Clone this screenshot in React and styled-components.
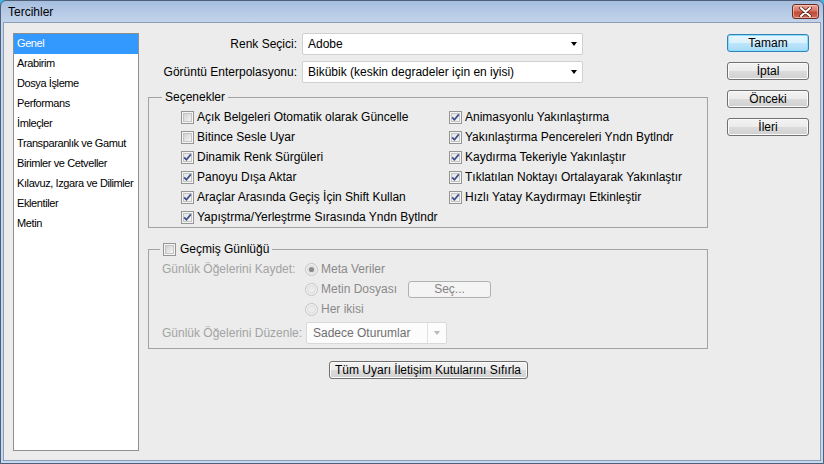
import React from 'react';
import styled, { createGlobalStyle, css } from 'styled-components';

const Global = createGlobalStyle`
  html, body { margin: 0; padding: 0; }
  body {
    font-family: "Liberation Sans", Arial, sans-serif;
    font-size: 12px;
    color: #000;
    background: #3fb6e8;
  }
  * { box-sizing: border-box; }
`;

const Window = styled.div`
  width: 824px;
  height: 464px;
  display: flex;
  flex-direction: column;
  border: 1px solid #4d5f79;
  border-radius: 6px 6px 0 0;
  background: linear-gradient(#a6bedf 0px, #c4d5eb 22px, #c6d8ee 100%);
  padding: 0 2px 2px;
`;

const TitleBar = styled.div`
  height: 21px;
  flex: none;
  display: flex;
  align-items: center;
  justify-content: space-between;
  padding: 0 2px 0 5px;
  font-size: 12px;
  color: #000;
`;

const CloseButton = styled.div`
  width: 27px;
  height: 15px;
  border: 1px solid #6b2a23;
  border-radius: 3px;
  background: linear-gradient(#e8a497 0%, #d57564 45%, #c24a35 55%, #cf6b55 100%);
  box-shadow: inset 0 0 0 1px rgba(255, 220, 210, 0.55);
  display: flex;
  align-items: center;
  justify-content: center;
`;

const Client = styled.div`
  flex: 1;
  display: flex;
  border: 1px solid #8a9db8;
  background: #ececec;
  padding: 10px 11px 9px 9px;
`;

const Sidebar = styled.ul`
  width: 126px;
  margin: 0;
  padding: 0;
  list-style: none;
  background: #fff;
  border: 1px solid #8f8f8f;
  flex: none;
`;

const SideItem = styled.li`
  height: 20px;
  line-height: 19px;
  padding-left: 3px;
  font-size: 11px;
  letter-spacing: -0.4px;
  white-space: nowrap;
  color: ${p => (p.$active ? '#fff' : '#000')};
  background: ${p => (p.$active ? '#3399ff' : 'transparent')};
`;

const Main = styled.div`
  width: 560px;
  margin-left: 9px;
  display: flex;
  flex-direction: column;
  flex: none;
`;

const FormGrid = styled.div`
  display: grid;
  grid-template-columns: 149px 281px;
  column-gap: 5px;
  row-gap: 6px;
  align-items: center;
`;

const FieldLabel = styled.label`
  text-align: right;
  white-space: nowrap;
  color: ${p => (p.$disabled ? '#a3a3a3' : '#000')};
`;

const Select = styled.div`
  position: relative;
  height: ${p => (p.$h || 22)}px;
  display: flex;
  align-items: center;
  padding-left: ${p => (p.$disabled ? 6 : 5)}px;
  background: ${p => (p.$disabled ? '#fcfcfc' : '#fff')};
  border: 1px solid ${p => (p.$disabled ? '#d9d9d9' : '#d0d0d0')};
  border-radius: 2px;
  color: ${p => (p.$disabled ? '#6f6f6f' : '#000')};
  white-space: nowrap;
`;

const SelectText = styled.span`
  flex: 1;
`;

const ArrowCell = styled.span`
  width: ${p => (p.$divided ? 19 : 17)}px;
  align-self: stretch;
  display: flex;
  align-items: center;
  justify-content: center;
  border-left: ${p => (p.$divided ? '1px solid #e2e2e2' : 'none')};
  &::after {
    content: '';
    border-left: 3.5px solid transparent;
    border-right: 3.5px solid transparent;
    border-top: 4px solid ${p => (p.$divided ? '#b9b9b9' : '#000')};
  }
`;

const Group = styled.fieldset`
  margin: ${p => p.$mt}px 0 0;
  padding: ${p => p.$pad};
  border: 1px solid #a3a3a3;
  min-width: 0;
`;

const Legend = styled.legend`
  margin-left: ${p => p.$ml}px;
  padding: 0 3px;
  line-height: 16px;
  font-size: 12px;
  display: flex;
  align-items: center;
  gap: 4px;
`;

const Options = styled.div`
  display: flex;
  padding-left: 32px;
`;

const OptionColumn = styled.div`
  width: ${p => (p.$w ? `${p.$w}px` : 'auto')};
  display: flex;
  flex-direction: column;
`;

const CheckRow = styled.label`
  height: 20px;
  display: flex;
  align-items: center;
  gap: 3px;
  white-space: nowrap;
`;

const BoxSvg = styled.svg`
  flex: none;
  display: block;
`;

const HistoryRow = styled.div`
  display: grid;
  grid-template-columns: 143px auto;
  align-items: ${p => (p.$top ? 'start' : 'center')};
  margin-top: ${p => p.$mt || 0}px;
`;

const RowLabel = styled(FieldLabel)`
  text-align: left;
  line-height: 20px;
`;

const RadioList = styled.div`
  display: flex;
  flex-direction: column;
`;

const RadioRow = styled.div`
  height: 20px;
  display: flex;
  align-items: center;
  gap: 3px;
  color: #8a8a8a;
  white-space: nowrap;
`;

const RadioText = styled.span``;

const Button = styled.button`
  font-family: "Liberation Sans", Arial, sans-serif;
  font-size: 12px;
  height: ${p => p.$h || 18}px;
  width: ${p => (p.$w ? `${p.$w}px` : 'auto')};
  padding: 0;
  border-radius: 3px;
  color: #000;
  line-height: 14px;
  border: 1px solid #707070;
  background: linear-gradient(#f3f3f3 0%, #ebebeb 50%, #dcdcdc 50%, #d0d0d0 100%);
  box-shadow: inset 0 0 0 1px #fbfbfb;
  ${p =>
    p.$primary &&
    css`
      border-color: #3c7fb1;
      background: linear-gradient(#eaf6fd 0%, #d9f0fc 50%, #bee6fd 50%, #a7d9f5 100%);
      box-shadow: inset 0 0 0 1px #7fe0ff;
    `}
  ${p =>
    p.$disabled &&
    css`
      border-color: #adb2b5;
      background: #f4f4f4;
      box-shadow: none;
      color: #838383;
    `}
`;

const SelectButton = styled(Button)`
  margin-left: 8px;
`;

const ResetButton = styled(Button)`
  align-self: center;
  margin-top: 12px;
`;

const ButtonColumn = styled.div`
  width: 82px;
  margin-left: 19px;
  padding-top: 1px;
  display: flex;
  flex-direction: column;
  gap: 10px;
  flex: none;
`;

let gid = 0;
function CheckBox({ checked }) {
  const id = React.useMemo(() => `cb${gid++}`, []);
  return (
    <BoxSvg width="13" height="13" viewBox="0 0 13 13">
      <defs>
        <linearGradient id={id} x1="0" y1="0" x2="1" y2="1">
          <stop offset="0" stopColor={checked ? '#e4e4e4' : '#cfcfcf'} />
          <stop offset="1" stopColor="#f7f7f7" />
        </linearGradient>
      </defs>
      <rect x="0.5" y="0.5" width="12" height="12" fill="#f5f5f5" stroke="#959595" />
      <rect x="2.5" y="2.5" width="8" height="8" fill={`url(#${id})`} stroke="#c4c4c4" />
      {checked && (
        <path d="M3.2 6.4 L5.4 8.8 L9.8 3.4" fill="none" stroke="#3b4f8c" strokeWidth="1.7" />
      )}
    </BoxSvg>
  );
}

function Radio({ checked }) {
  return (
    <BoxSvg width="13" height="13" viewBox="0 0 13 13">
      <circle cx="6.5" cy="6.5" r="6" fill="#f4f4f4" stroke="#c2c2c2" />
      <circle cx="6.5" cy="6.5" r="4" fill="#ebebeb" stroke="#dadada" />
      {checked && <circle cx="6.5" cy="6.5" r="2.6" fill="#8c8c8c" />}
    </BoxSvg>
  );
}

const sideItems = [
  'Genel',
  'Arabirim',
  'Dosya İşleme',
  'Performans',
  'İmleçler',
  'Transparanlık ve Gamut',
  'Birimler ve Cetveller',
  'Kılavuz, Izgara ve Dilimler',
  'Eklentiler',
  'Metin',
];

const leftOptions = [
  ['Açık Belgeleri Otomatik olarak Güncelle', false],
  ['Bitince Sesle Uyar', false],
  ['Dinamik Renk Sürgüleri', true],
  ['Panoyu Dışa Aktar', true],
  ['Araçlar Arasında Geçiş İçin Shift Kullan', true],
  ['Yapıştrma/Yerleştrme Sırasında Yndn Bytlndr', true],
];

const rightOptions = [
  ['Animasyonlu Yakınlaştırma', true],
  ['Yakınlaştırma Pencereleri Yndn Bytlndr', true],
  ['Kaydırma Tekeriyle Yakınlaştır', true],
  ['Tıklatılan Noktayı Ortalayarak Yakınlaştır', true],
  ['Hızlı Yatay Kaydırmayı Etkinleştir', true],
];

export default function App() {
  return (
    <>
      <Global />
      <Window>
        <TitleBar>
          <span>Tercihler</span>
          <CloseButton>
            <svg width="13" height="10" viewBox="0 0 13 10">
              <path
                d="M2 1 L11 9 M11 1 L2 9"
                stroke="#5a2019"
                strokeWidth="3.6"
                strokeLinecap="round"
              />
              <path d="M2 1 L11 9 M11 1 L2 9" stroke="#fff" strokeWidth="2" strokeLinecap="round" />
            </svg>
          </CloseButton>
        </TitleBar>
        <Client>
          <Sidebar>
            {sideItems.map((t, i) => (
              <SideItem key={t} $active={i === 0}>
                {t}
              </SideItem>
            ))}
          </Sidebar>
          <Main>
            <FormGrid>
              <FieldLabel>Renk Seçici:</FieldLabel>
              <Select>
                <SelectText>Adobe</SelectText>
                <ArrowCell />
              </Select>
              <FieldLabel>Görüntü Enterpolasyonu:</FieldLabel>
              <Select>
                <SelectText>Bikübik (keskin degradeler için en iyisi)</SelectText>
                <ArrowCell />
              </Select>
            </FormGrid>

            <Group $mt={6} $pad="2px 0 0 0">
              <Legend $ml={13}>Seçenekler</Legend>
              <Options>
                <OptionColumn $w={268}>
                  {leftOptions.map(([t, c]) => (
                    <CheckRow key={t}>
                      <CheckBox checked={c} />
                      {t}
                    </CheckRow>
                  ))}
                </OptionColumn>
                <OptionColumn>
                  {rightOptions.map(([t, c]) => (
                    <CheckRow key={t}>
                      <CheckBox checked={c} />
                      {t}
                    </CheckRow>
                  ))}
                </OptionColumn>
              </Options>
            </Group>

            <Group $mt={13} $pad="2px 0 4px 13px">
              <Legend $ml={-2}>
                <CheckBox checked={false} />
                Geçmiş Günlüğü
              </Legend>
              <HistoryRow $top>
                <RowLabel $disabled>Günlük Öğelerini Kaydet:</RowLabel>
                <RadioList>
                  <RadioRow>
                    <Radio checked />
                    <RadioText>Meta Veriler</RadioText>
                  </RadioRow>
                  <RadioRow>
                    <Radio />
                    <RadioText>Metin Dosyası</RadioText>
                    <SelectButton $disabled $w={83} $h={17}>
                      Seç...
                    </SelectButton>
                  </RadioRow>
                  <RadioRow>
                    <Radio />
                    <RadioText>Her ikisi</RadioText>
                  </RadioRow>
                </RadioList>
              </HistoryRow>
              <HistoryRow $mt={3}>
                <RowLabel $disabled>Günlük Öğelerini Düzenle:</RowLabel>
                <Select $disabled style={{ width: 141, marginLeft: 1 }}>
                  <SelectText>Sadece Oturumlar</SelectText>
                  <ArrowCell $divided />
                </Select>
              </HistoryRow>
            </Group>

            <ResetButton $w={199}>Tüm Uyarı İletişim Kutularını Sıfırla</ResetButton>
          </Main>
          <ButtonColumn>
            <Button $primary>Tamam</Button>
            <Button>İptal</Button>
            <Button>Önceki</Button>
            <Button>İleri</Button>
          </ButtonColumn>
        </Client>
      </Window>
    </>
  );
}
